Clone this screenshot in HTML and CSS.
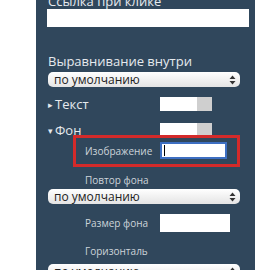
FILE: index.html
```html
<!DOCTYPE html>
<html lang="ru">
<head>
    <meta charset="UTF-8">
    <title>Панель свойств</title>
    <link rel="stylesheet" href="styles.css">
</head>
<body>
    <div class="panel">
        <!-- Ссылка -->
        <div class="label top-label">Ссылка при клике</div>
        <div class="text-input wide"></div>

        <!-- Выравнивание -->
        <div class="label align-label">Выравнивание внутри</div>
        <div class="select">
            <span>по умолчанию</span>
            <svg class="arrows" width="7" height="10" viewBox="0 0 7 10"><path d="M3.5 0.5 L6.5 4 H0.5 Z M3.5 9.5 L6.5 6 H0.5 Z"></path></svg>
        </div>

        <!-- Секции -->
        <div class="section-row first">
            <div class="section-title"><span class="tri">&#9656;</span>Текст</div>
            <div class="color-box"><div class="color-white"></div><div class="color-grey"></div></div>
        </div>
        <div class="section-row second">
            <div class="section-title"><span class="tri">&#9662;</span>Фон</div>
            <div class="color-box"><div class="color-white"></div><div class="color-grey"></div></div>
        </div>

        <div class="highlight">
            <div class="sub-row">
                <div class="sub-label">Изображение</div>
                <div class="text-input focused"><span class="caret"></span></div>
            </div>
        </div>

        <div class="sub-label standalone repeat-label">Повтор фона</div>
        <div class="select">
            <span>по умолчанию</span>
            <svg class="arrows" width="7" height="10" viewBox="0 0 7 10"><path d="M3.5 0.5 L6.5 4 H0.5 Z M3.5 9.5 L6.5 6 H0.5 Z"></path></svg>
        </div>

        <div class="sub-row size-row">
            <div class="sub-label">Размер фона</div>
            <div class="text-input size"></div>
        </div>

        <div class="sub-label standalone horiz-label">Горизонталь</div>
        <div class="select">
            <span>по умолчанию</span>
            <svg class="arrows" width="7" height="10" viewBox="0 0 7 10"><path d="M3.5 0.5 L6.5 4 H0.5 Z M3.5 9.5 L6.5 6 H0.5 Z"></path></svg>
        </div>
    </div>
</body>
</html>
```

FILE: styles.css
```css
body {
    margin: 0;
    background-color: #ffffff;
    font-family: "Open Sans", "Liberation Sans", sans-serif;
    height: 270px;
    overflow: hidden;
}

.panel {
    margin-left: 36px;
    height: 290px;
    margin-top: -20px;
    padding: 10px 0 0 12px;
    background-color: #30475c;
    display: flex;
    flex-direction: column;
}

.label {
    color: #e6eaee;
    font-size: 13px;
    line-height: 16px;
}

.top-label {
    margin-top: 3px;
}

.text-input {
    background: #ffffff;
    height: 18px;
    box-sizing: border-box;
}

.wide {
    width: 202px;
    margin-top: 0;
    margin-left: -1px;
}

.align-label {
    margin-top: 26px;
}

.select {
    width: 192px;
    height: 15px;
    margin-top: 3px;
    box-sizing: border-box;
    border-radius: 5px;
    background: linear-gradient(#ffffff, #e4e4e4);
    display: flex;
    align-items: center;
    justify-content: space-between;
    padding: 0 4px 0 6px;
    font-size: 12px;
    color: #222222;
}

.select span {
    line-height: 15px;
}

.arrows path {
    fill: #333333;
}

.section-row {
    display: flex;
    align-items: center;
    justify-content: space-between;
    width: 164px;
    height: 14px;
}

.section-row.first {
    margin-top: 10px;
}

.section-row.second {
    margin-top: 12px;
}

.section-title {
    color: #e6eaee;
    font-size: 13px;
    line-height: 14px;
}

.tri {
    font-size: 9px;
    margin-right: 2px;
    vertical-align: 1px;
}

.color-box {
    display: flex;
    width: 52px;
    height: 14px;
}

.color-white {
    flex: 0 0 37px;
    background: #ffffff;
}

.color-grey {
    flex: 1;
    background: #cfcfcf;
}

.highlight {
    margin-top: -2px;
    margin-left: 25px;
    width: 167px;
    height: 32px;
    box-sizing: border-box;
    border: 3px solid #d42a2a;
    padding: 4px 0 0 9px;
}

.sub-row {
    display: flex;
    align-items: center;
}

.sub-label {
    color: #cdd4da;
    font-size: 10px;
    line-height: 12px;
    width: 75px;
}

.focused {
    width: 67px;
    height: 17px;
    border: 2px solid #3d6fc2;
    position: relative;
}

.caret {
    position: absolute;
    left: 2px;
    top: 1px;
    width: 1px;
    height: 11px;
    background: #000000;
}

.standalone {
    margin-left: 37px;
}

.repeat-label {
    margin-top: 7px;
}

.size-row {
    margin-left: 37px;
    margin-top: 10px;
}

.size {
    width: 70px;
    height: 18px;
}

.horiz-label {
    margin-top: 13px;
}

.horiz-label + .select {
    margin-top: 7px;
}
```
